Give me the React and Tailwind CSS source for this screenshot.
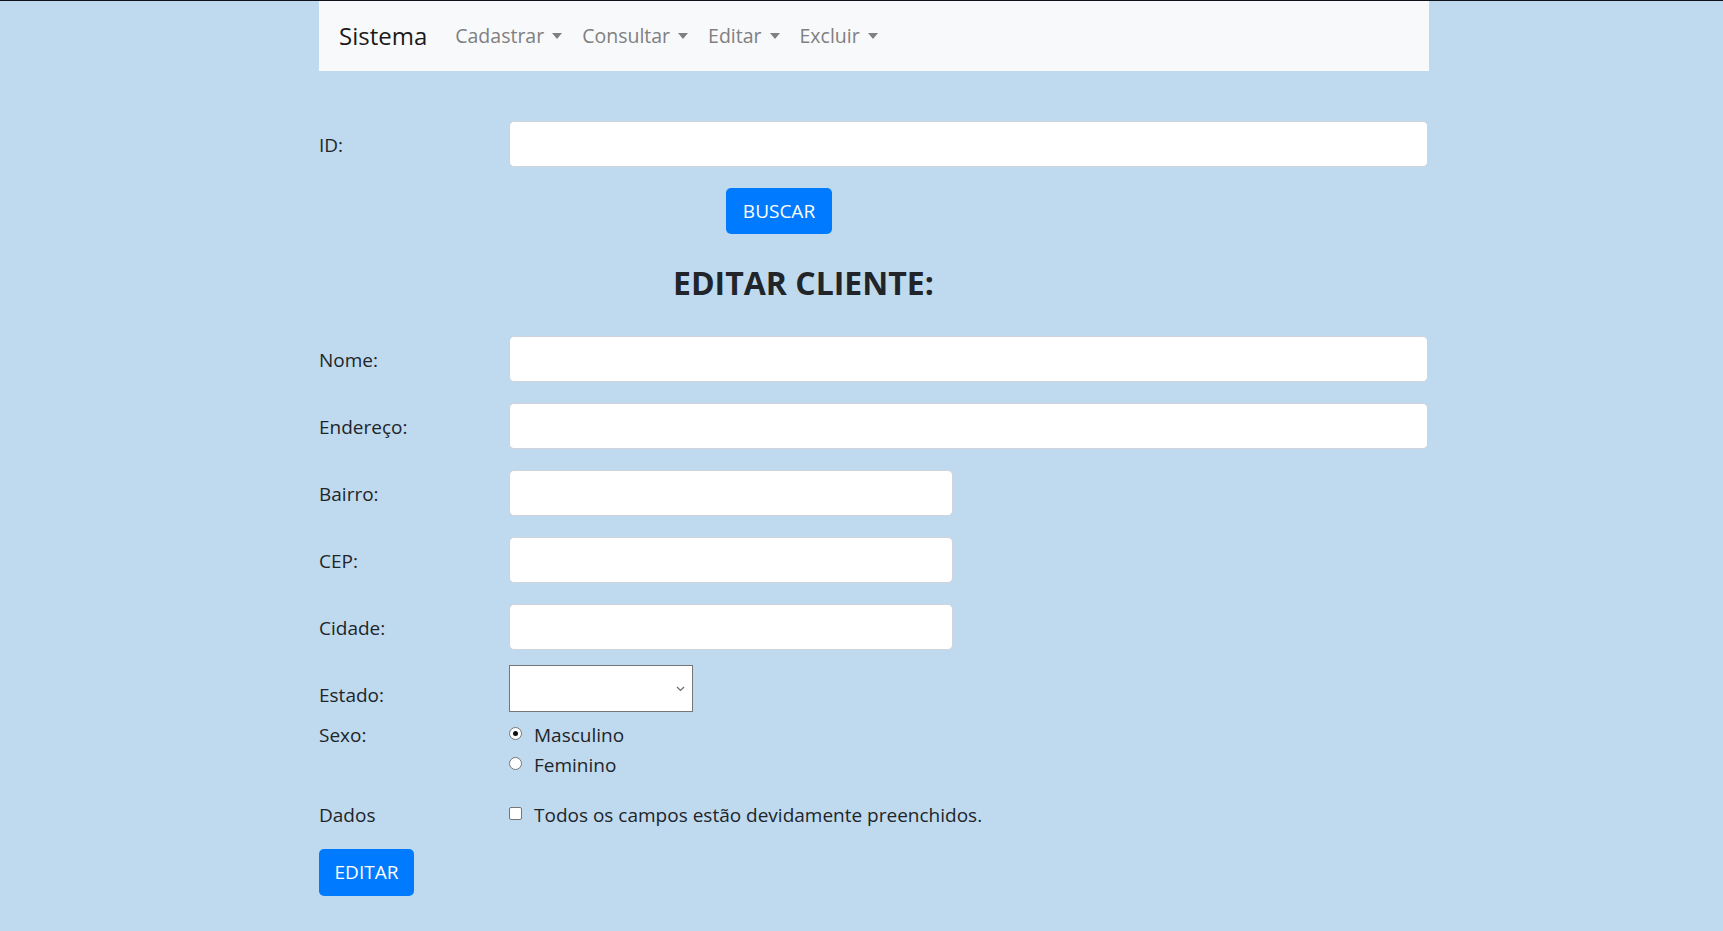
import React, { useState } from 'react';

const font = { fontFamily: '"Open Sans", "Noto Sans", sans-serif' };

const Caret = () => (
  <span className="inline-block ml-[8px] align-middle w-0 h-0 border-l-[5px] border-r-[5px] border-t-[6px] border-l-transparent border-r-transparent border-t-[#7f8081]" />
);

const NavItem = ({ label, className }) => (
  <a className={`flex items-center text-[#7f8081] text-[19.5px] cursor-pointer ${className}`}>
    {label}
    <Caret />
  </a>
);

const Row = ({ label, children, className = '', labelClass = '' }) => (
  <div className={`flex items-center ${className}`}>
    <label className={`w-[190px] shrink-0 text-[19px] text-[#212529] ${labelClass}`}>{label}</label>
    {children}
  </div>
);

const inputCls =
  'h-[46px] bg-white border border-[#ced4da] rounded-[5px] px-3 text-[19px] outline-none';

export default function App() {
  const [sexo, setSexo] = useState('M');
  const [ok, setOk] = useState(false);

  return (
    <div className="min-h-screen w-full bg-[#bfdaef] text-[#212529]" style={font}>
      <div className="h-px bg-[#0f1218]" />

      {/* Navbar */}
      <nav className="ml-[319px] w-[1110px] h-[70px] bg-[#f8f9fa] flex items-center pl-[20px]">
        <span className="text-[24px] text-[#1a1a1a] mr-[28px]">Sistema</span>
        <NavItem label="Cadastrar" className="mr-[20px]" />
        <NavItem label="Consultar" className="mr-[20px]" />
        <NavItem label="Editar" className="mr-[20px]" />
        <NavItem label="Excluir" />
      </nav>

      <div className="ml-[319px] w-[1110px]">
        <Row label="ID:" className="mt-[50px]" labelClass="mt-[2px]">
          <input className={`${inputCls} w-[919px]`} />
        </Row>

        <button className="mt-[21px] ml-[407px] w-[106px] h-[46px] bg-[#007bff] text-white text-[19px] rounded-[5px]">
          BUSCAR
        </button>

        <h2 className="mt-[27px] ml-[354px] text-[32px] font-bold leading-[44px] text-[#212529]">
          EDITAR CLIENTE:
        </h2>

        <Row label="Nome:" className="mt-[31px]" labelClass="mt-[2px]">
          <input className={`${inputCls} w-[919px]`} />
        </Row>
        <Row label="Endereço:" className="mt-[21px]" labelClass="mt-[2px]">
          <input className={`${inputCls} w-[919px]`} />
        </Row>
        <Row label="Bairro:" className="mt-[21px]" labelClass="mt-[2px]">
          <input className={`${inputCls} w-[444px]`} />
        </Row>
        <Row label="CEP:" className="mt-[21px]" labelClass="mt-[2px]">
          <input className={`${inputCls} w-[444px]`} />
        </Row>
        <Row label="Cidade:" className="mt-[21px]" labelClass="mt-[2px]">
          <input className={`${inputCls} w-[444px]`} />
        </Row>

        <Row label="Estado:" className="mt-[15px]" labelClass="mt-[14px]">
          <div className="relative w-[184px] h-[47px] bg-white border border-[#767676]">
            <svg
              className="absolute right-[7px] top-[20px]"
              width="9"
              height="6"
              viewBox="0 0 9 6"
              fill="none"
              stroke="#6b6b6b"
              strokeWidth="1.2"
            >
              <path d="M1 1l3.5 3.5L8 1" />
            </svg>
          </div>
        </Row>

        <div className="flex mt-[8px]">
          <label className="w-[190px] shrink-0 text-[19px] leading-[30px]">Sexo:</label>
          <div className="flex flex-col">
            {[
              ['M', 'Masculino'],
              ['F', 'Feminino'],
            ].map(([v, t]) => (
              <label key={v} className="flex items-center h-[30px] text-[19px] cursor-pointer" onClick={() => setSexo(v)}>
                <span className="w-[13px] h-[13px] rounded-full border border-[#767676] bg-white flex items-center justify-center mr-[12px] -mt-[3px]">
                  {sexo === v && <span className="w-[5px] h-[5px] rounded-full bg-[#111]" />}
                </span>
                {t}
              </label>
            ))}
          </div>
        </div>

        <div className="flex items-center mt-[20px] h-[30px]">
          <label className="w-[190px] shrink-0 text-[19px]">Dados</label>
          <label className="flex items-center text-[19px] cursor-pointer" onClick={() => setOk(!ok)}>
            <span className="w-[13px] h-[13px] border border-[#767676] bg-white rounded-[2px] mr-[12px] -mt-[4px] flex items-center justify-center text-[10px] leading-none">
              {ok ? '✓' : ''}
            </span>
            Todos os campos estão devidamente preenchidos.
          </label>
        </div>

        <button className="mt-[19px] w-[95px] h-[47px] bg-[#007bff] text-white text-[19px] rounded-[5px]">
          EDITAR
        </button>
      </div>
    </div>
  );
}
